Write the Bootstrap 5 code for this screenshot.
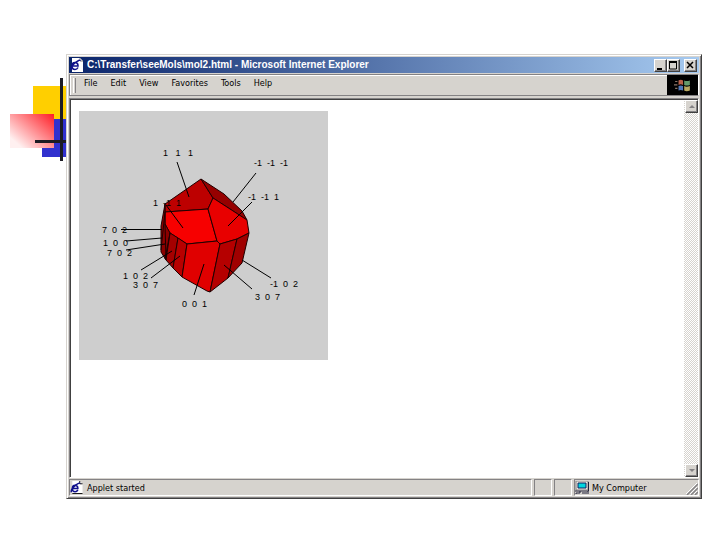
<!DOCTYPE html>
<html lang="en">
<head>
<meta charset="utf-8">
<meta name="viewport" content="width=device-width, initial-scale=1">
<title>Crystal viewer slide</title>
<link href="https://cdn.jsdelivr.net/npm/bootstrap@5.3.0/dist/css/bootstrap.min.css" rel="stylesheet">
<style>
body{background:#fff;color:#000;font-family:"DejaVu Sans Condensed","DejaVu Sans",sans-serif;font-size:9px;line-height:12px}
.slide{padding:54px 18px 41px 66px}
.ornament{position:absolute;left:0;top:70px}
.win{background:#d6d3ce;border:1px solid;border-color:#d6d3ce #404040 #404040 #d6d3ce;box-shadow:inset 1px 1px #fff,inset -1px -1px #848284;padding:2px}
.titlebar{height:16px;padding:0 2px 0 0;background:linear-gradient(90deg,#0a246a,#a6caf0);color:#fff;font-family:"Liberation Sans",Arial,sans-serif;font-size:10px;font-weight:bold}
.win button{padding:0;border:1px solid;border-color:#fff #404040 #404040 #fff;border-radius:0;background:#d6d3ce;box-shadow:inset -1px -1px #848284;width:13px;height:13px;line-height:0;display:block;flex:none}
.win button svg{display:block;margin:auto}
.menus{height:22px;margin-top:1px;border:1px solid;border-color:#848284 #fff #848284 #848284;box-shadow:inset 1px 1px #fff}
.grip{width:3px;height:15px;border-left:1px solid #fff;border-right:1px solid #848284;margin:0 8px 0 3px}
.menus a{color:#000;text-decoration:none}
.menu-list{gap:13px;padding-bottom:4px}
.brand-box{width:31px;background:#000}
.view{margin-top:2px;border:1px solid #848284;border-right-color:#fff;border-bottom-color:#fff;box-shadow:inset 1px 1px #404040;background:#fff;padding:1px 0 0 1px}
.applet{margin:11px 0 0 8px;width:249px;height:249px}
.applet text{font-family:"Liberation Sans",Arial,sans-serif;font-size:9px}
.scroller{width:14px;background:repeating-conic-gradient(#d6d3ce 0 25%,#fff 0 50%) 0 0/2px 2px}
.statusbar{height:17px;margin-top:1px;gap:2px}
.pane{border:1px solid;border-color:#848284 #fff #fff #848284}
.pane-sm{width:18px}
.zone{width:125px}
</style>
<script src="https://cdn.jsdelivr.net/npm/bootstrap@5.3.0/dist/js/bootstrap.bundle.min.js"></script>
</head>
<body>
<svg class="ornament" width="80" height="95" viewBox="0 70 80 95" aria-hidden="true">
<defs><linearGradient id="rose" x1="1" y1="0" x2="0.1" y2="0.8"><stop offset="0" stop-color="#ff1c24"/><stop offset="1" stop-color="#fff0f0"/></linearGradient></defs>
<path fill="#ffcf00" d="M33 86h40v33H33z"/><path fill="#3131ce" d="M42 119h30v38H42z"/><path fill="url(#rose)" d="M10 114h44v34H10z"/>
<path fill="#1c1c24" d="M60 78h3v83h-3zM35 140h37v3H35z"/>
</svg>
<main class="slide d-flex min-vh-100 position-relative">
<section class="win d-flex flex-column flex-grow-1">
<header class="titlebar d-flex align-items-center">
<svg width="14" height="14" viewBox="-1 0 14 14" aria-hidden="true"><path d="M2 0h8l3 3v11H2z" fill="#fff"/><path d="M10 0v3h3" fill="none" stroke="#848284"/><path d="M2 8h6Q8 4.500 5 4.500T2 8t3 3.500q2 0 3-2M1 12Q0 9 5 5t5-2" fill="none" stroke="#10108c" stroke-width="1.600"/></svg>
<span class="me-auto text-nowrap ps-1">C:\Transfer\seeMols\mol2.html - Microsoft Internet Explorer</span>
<button type="button" aria-label="Minimize"><svg width="11" height="11"><path d="M2 8h5v2H2z"/></svg></button>
<button type="button" aria-label="Maximize"><svg width="11" height="11"><path d="M1.500 2h7v7h-7z" fill="none" stroke="#000"/><path d="M1 1h8v2H1z"/></svg></button>
<button type="button" class="ms-1" aria-label="Close"><svg width="11" height="11"><path d="M2 2l6 6M8 2L2 8" stroke="#000" stroke-width="1.500"/></svg></button>
</header>
<nav class="menus d-flex align-items-stretch">
<div class="d-flex align-items-center me-auto"><span class="grip"></span>
<div class="menu-list d-flex"><a href="#">File</a><a href="#">Edit</a><a href="#">View</a><a href="#">Favorites</a><a href="#">Tools</a><a href="#">Help</a></div></div>
<span class="brand-box d-flex align-items-center justify-content-center"><svg width="17" height="15" viewBox="0 0 15 13" aria-hidden="true"><path d="M4 2q2-1 4 0v4q-2-1-4 0z" fill="#b86048"/><path d="M9 2q2 1 5 0v4q-3 1-5 0z" fill="#659b6c"/><path d="M4 7q2-1 4 0v4q-2-1-4 0z" fill="#5078b8"/><path d="M9 7q2 1 5 0v4q-3 1-5 0z" fill="#b8a860"/><path d="M1 3h2M0 6h3M1 9h2" stroke="#8a7468"/></svg></span>
</nav>
<div class="view d-flex flex-grow-1">
<div class="flex-grow-1">
<svg class="applet d-block" viewBox="79 111 249 249" role="img" aria-label="Crystal with indexed faces">
<path fill="#cecece" d="M79 111h249v249H79z"/>
<g stroke="#200000" stroke-width="1" stroke-linejoin="round">
<path fill="#bd0000" d="M201 179L213 198 208 209 165 212 165 204z"/>
<path fill="#960000" d="M201 179L224 194 242 211 247 220 213 198z"/>
<path fill="#f70000" d="M165 212L208 209 217 241 187 244 170 233 165 224z"/>
<path fill="#e80000" d="M213 198L247 220 249 233 237 239 220 244 217 241 208 209z"/>
<path fill="#8c0000" d="M165 204L165 224 170 233 166 260 161 252 161 226z"/>
<path fill="#a50000" d="M170 233L178 238 173 268 166 260z"/>
<path fill="#b80000" d="M178 238L187 244 182 277 173 268z"/>
<path fill="#e00000" d="M187 244L217 241 220 244 210 292 207 291 182 277z"/>
<path fill="#b50000" d="M220 244L237 239 228 278 210 292z"/>
<path fill="#a00000" d="M237 239L249 233 242 263 228 278z"/>
<path fill="none" d="M165 212l-4 38M165 224l1 36M170 233l-5 26"/>
</g>
<path fill="none" stroke="#000" stroke-width="1" d="M177 162l12 35M256 173l-23 29M252 202l-24 24M166 205l17 23M121 229.500h41M126 241l36-3M126 250l39-6M141 270l31-19M151 278l29-22M194 295l10-31M271 278l-29-18M252 289l-28-24"/>
<text x="163" y="156">1&#160;&#160; 1&#160;&#160; 1</text><text x="254" y="166">-1&#160; -1&#160; -1</text><text x="248" y="200">-1&#160; -1&#160; 1</text><text x="153" y="206">1&#160; -1&#160; 1</text><text x="102" y="233">7&#160; 0&#160; 2</text><text x="103" y="246">1&#160; 0&#160; 0</text><text x="107" y="256">7&#160; 0&#160; 2</text><text x="123" y="279">1&#160; 0&#160; 2</text><text x="133" y="288">3&#160; 0&#160; 7</text><text x="182" y="307">0&#160; 0&#160; 1</text><text x="270" y="287">-1&#160; 0&#160; 2</text><text x="255" y="300">3&#160; 0&#160; 7</text>
</svg>
</div>
<div class="scroller d-flex flex-column justify-content-between align-items-center">
<button type="button" aria-label="Scroll up"><svg width="11" height="11"><path d="M3 7h6L6 4z" fill="#848284"/></svg></button>
<button type="button" aria-label="Scroll down"><svg width="11" height="11"><path d="M3 4h6L6 7z" fill="#848284"/></svg></button>
</div>
</div>
<footer class="statusbar d-flex">
<div class="pane d-flex align-items-center flex-grow-1"><svg width="13" height="13" viewBox="0 0 13 14" class="me-1" aria-hidden="true"><path d="M2 0h8l3 3v11H2z" fill="#fff"/><path d="M10 0v3h3M2 13.500h11" fill="none" stroke="#000"/><path d="M2 8h6Q8 4.500 5 4.500T2 8t3 3.500q2 0 3-2M1 12Q0 9 5 5t5-2" fill="none" stroke="#10108c" stroke-width="1.600"/></svg>Applet started</div>
<div class="pane pane-sm"></div><div class="pane pane-sm"></div>
<div class="pane zone d-flex align-items-center"><svg width="17" height="13" viewBox="0 0 17 13" aria-hidden="true"><path d="M1 0h12v9H1z" fill="#ece9e0" stroke="#848284"/><path d="M3 2h8v5H3z" fill="#00d5de" stroke="#102060"/><path d="M2 9h11l2 4H0z" fill="#d6d3ce"/><path d="M0 10h5v2H1v1M7 12h5M13 10v3M13.500 1v9H5" fill="none" stroke="#202038"/></svg>My Computer
<svg class="ms-auto align-self-end" width="12" height="12" aria-hidden="true"><path d="M1 12L12 1M5 12l7-7M9 12l3-3" stroke="#848284" stroke-width="1.500"/><path d="M0 11L11 0M4 11l7-7M8 11l3-3" stroke="#fff"/></svg></div>
</footer>
</section>
</main>
</body>
</html>
